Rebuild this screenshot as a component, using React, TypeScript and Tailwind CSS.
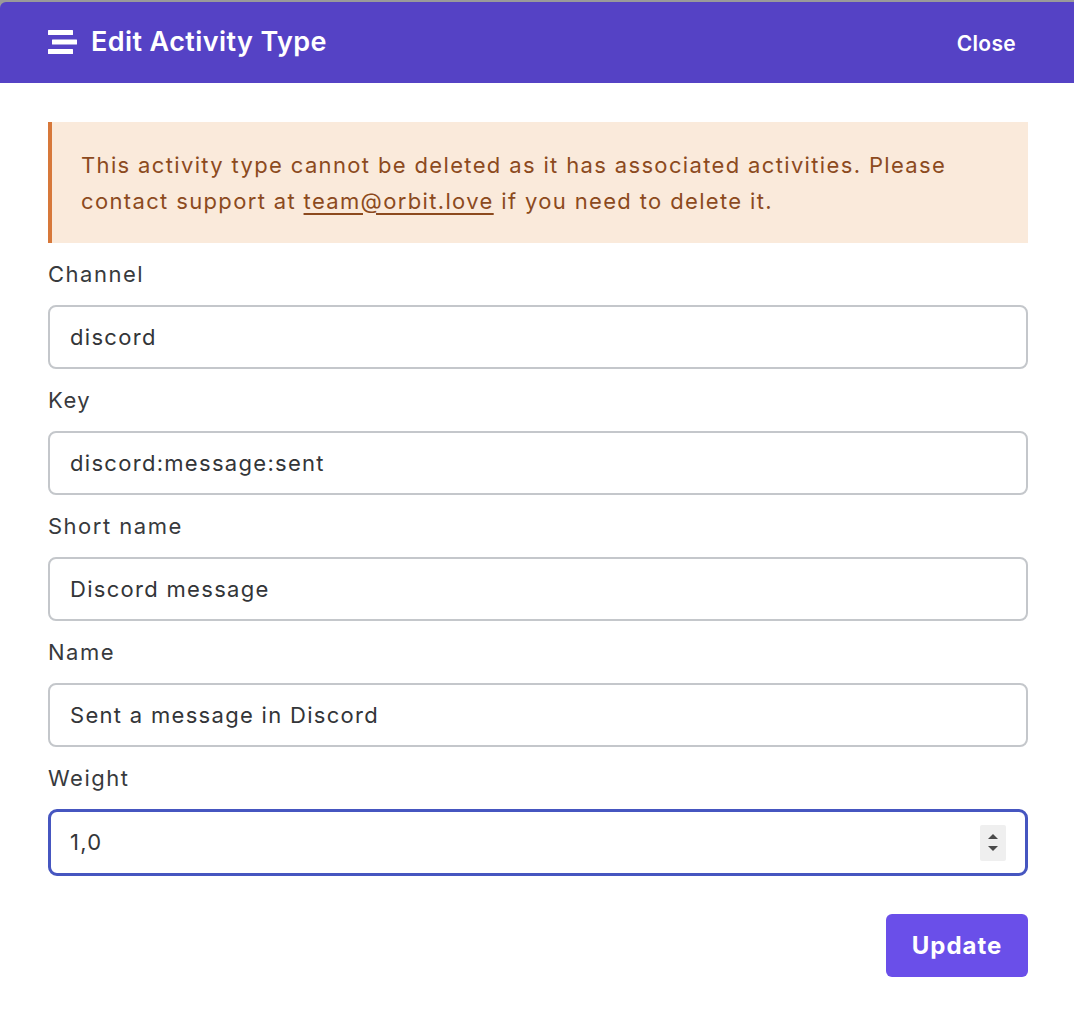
import React from "react";

function MenuIcon() {
  return (
    <svg width="30" height="25" viewBox="0 0 30 25" className="shrink-0">
      <rect x="0" y="0" width="25" height="5" rx="0.5" fill="#fff" />
      <rect x="4" y="9.5" width="25" height="5" rx="0.5" fill="#fff" />
      <rect x="0" y="19" width="25" height="5" rx="0.5" fill="#fff" />
    </svg>
  );
}

function Field({ label, value, first }: { label: string; value: string; first?: boolean }) {
  return (
    <div className={first ? "mt-[15px]" : "mt-[15px]"}>
      <div className="text-[22px] leading-[33px] tracking-[1.5px] text-[#383a3d] mb-[14px]">{label}</div>
      <div className="h-[64px] rounded-[8px] border-2 border-[#c4c7cb] bg-white flex items-center pl-[20px] text-[22px] tracking-[1.3px] text-[#333538]">
        {value}
      </div>
    </div>
  );
}

export default function App() {
  return (
    <div
      className="w-[1074px] h-[1026px] bg-white overflow-hidden"
      style={{ fontFamily: "Inter, 'Noto Sans', sans-serif" }}
    >
      <div className="bg-[#9a9a9a] pt-[2px]">
        <div className="h-[81px] bg-[#5542c5] rounded-tl-[6px] flex items-center justify-between pl-[48px] pr-[58px]">
          <div className="flex items-center gap-[13px]">
            <MenuIcon />
            <span className="text-[27px] font-semibold text-white tracking-[0.4px] mb-[1px]">Edit Activity Type</span>
          </div>
          <span className="text-[21px] font-semibold text-white tracking-[0.3px] mt-[2px]">Close</span>
        </div>
      </div>

      <div className="pl-[48px] pr-[46px] pt-[39px]">
        <div className="bg-[#faeadb] border-l-[4px] border-[#d7783a] h-[121px] pl-[29px] pr-[20px] flex items-center">
          <p className="text-[22px] leading-[36px] tracking-[1.35px] text-[#8c4a1e]">
            This activity type cannot be deleted as it has associated activities. Please contact support at{" "}
            <a className="underline underline-offset-[4px]">team@orbit.love</a> if you need to delete it.
          </p>
        </div>

        <Field first label="Channel" value="discord" />
        <Field label="Key" value="discord:message:sent" />
        <Field label="Short name" value="Discord message" />
        <Field label="Name" value="Sent a message in Discord" />

        <div className="mt-[15px]">
          <div className="text-[22px] leading-[33px] tracking-[1.5px] text-[#383a3d] mb-[14px]">Weight</div>
          <div className="h-[67px] rounded-[9px] border-[3px] border-[#4656c0] bg-white flex items-center justify-between pl-[19px] pr-[19px] text-[22px] tracking-[1.3px] text-[#333538]">
            <span>1,0</span>
            <div className="w-[26px] h-[36px] bg-[#efefef] rounded-[2px] flex flex-col items-center justify-center gap-[7px]">
              <svg width="10" height="5" viewBox="0 0 10 5"><polygon points="5,0 10,5 0,5" fill="#4a4a4a" /></svg>
              <svg width="10" height="5" viewBox="0 0 10 5"><polygon points="0,0 10,0 5,5" fill="#4a4a4a" /></svg>
            </div>
          </div>
        </div>

        <div className="flex justify-end mt-[38px]">
          <button className="w-[142px] h-[63px] rounded-[6px] bg-[#6a4fe9] text-white text-[24px] font-bold tracking-[1px]">
            Update
          </button>
        </div>
      </div>
    </div>
  );
}
